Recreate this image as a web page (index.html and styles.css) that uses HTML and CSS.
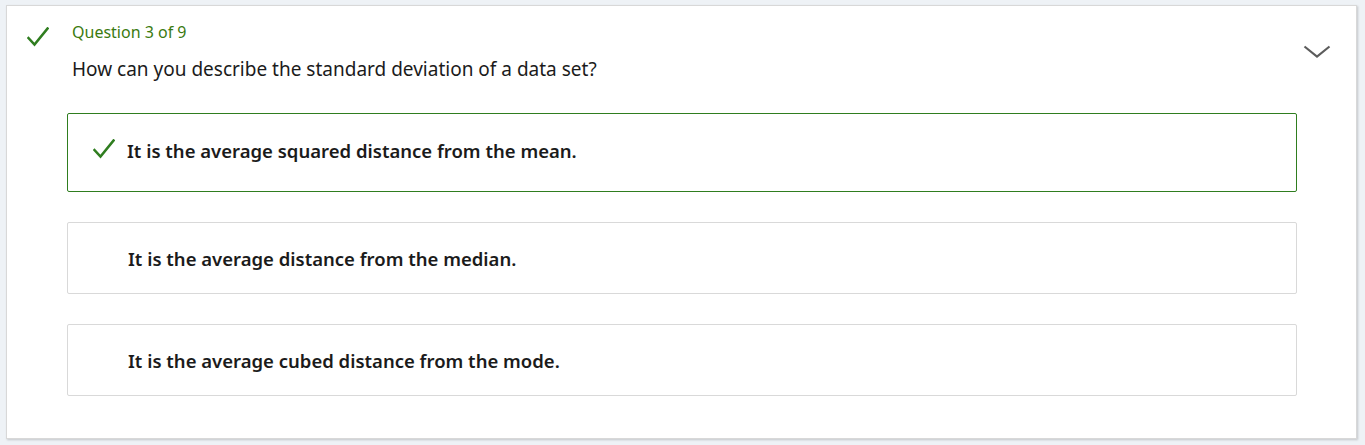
FILE: index.html
```html
<!DOCTYPE html>
<html lang="en">
<head>
<meta charset="utf-8">
<title>Question 3 of 9</title>
<link rel="stylesheet" href="styles.css">
</head>
<body>
<section class="card">
  <div class="header">
    <svg class="q-check" width="22" height="20" viewBox="0 0 22 20" aria-hidden="true"><path d="M1.5 11 L7.5 17.5 L20.5 1.5" fill="none" stroke="#2f7d1f" stroke-width="2.5" stroke-linecap="square"/></svg>
    <div class="q-text">
      <div class="q-label">Question 3 of 9</div>
      <div class="q-title">How can you describe the standard deviation of a data set?</div>
    </div>
    <svg class="chevron" width="28" height="14" viewBox="0 0 28 14" aria-hidden="true"><path d="M1.5 1.5 L14 11.5 L26.5 1.5" fill="none" stroke="#5c5c5c" stroke-width="2.2"/></svg>
  </div>
  <ul class="options">
    <li class="option correct">
      <svg class="o-check" width="22" height="20" viewBox="0 0 22 20" aria-hidden="true"><path d="M1.5 11 L7.5 17.5 L20.5 1.5" fill="none" stroke="#2f7d1f" stroke-width="2.5" stroke-linecap="square"/></svg>
      <span>It is the average squared distance from the mean.</span>
    </li>
    <li class="option"><span>It is the average distance from the median.</span></li>
    <li class="option"><span>It is the average cubed distance from the mode.</span></li>
  </ul>
</section>
</body>
</html>
```
FILE: styles.css
```css
html, body {
  margin: 0;
  padding: 0;
}
body {
  background: #eef2f6;
  padding: 5px 8px 4px 6px;
  font-family: "Noto Sans", "Open Sans", sans-serif;
  color: #1b1b1b;
}
.card {
  background: #fff;
  border: 1px solid #d8d8d8;
  box-shadow: 1px 1px 2px rgba(0,0,0,0.18);
  height: 434px;
  box-sizing: border-box;
  padding: 16px 25px 0 20px;
}
.header {
  display: flex;
  align-items: flex-start;
}
.q-check {
  flex: none;
  margin: 5px 23px 0 0;
}
.q-text {
  flex: 1;
}
.q-label {
  color: #3a7a10;
  font-size: 16px;
  line-height: 20px;
}
.q-title {
  font-size: 19px;
  line-height: 24px;
  margin-top: 15px;
}
.chevron {
  flex: none;
  margin-top: 23px;
}
.options {
  list-style: none;
  margin: 32px 34px 0 40px;
  padding: 0;
  display: flex;
  flex-direction: column;
  gap: 30px;
}
.option {
  border: 1px solid #d9d9d9;
  border-radius: 2px;
  height: 72px;
  box-sizing: border-box;
  display: flex;
  align-items: center;
  padding-left: 60px;
  font-size: 18.5px;
  font-weight: 600;
}
.option.correct {
  border-color: #2f7d1f;
  height: 79px;
  padding-left: 25px;
  padding-bottom: 5px;
}
.o-check {
  flex: none;
  margin: -2px 12px 0 0;
}
```
